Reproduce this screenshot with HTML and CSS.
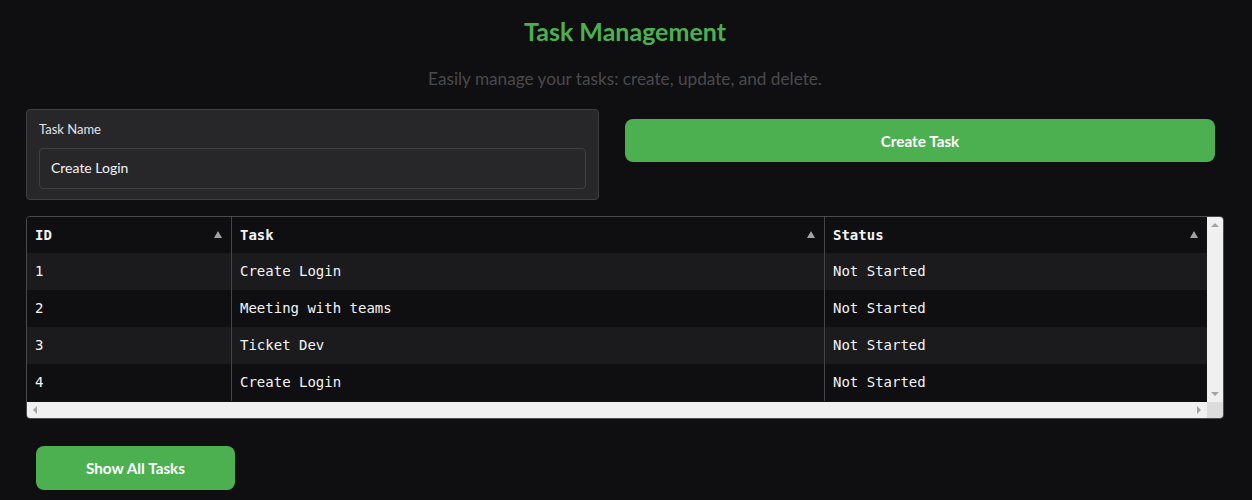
FILE: index.html
```html
<!DOCTYPE html>
<html lang="en">
<head>
<meta charset="utf-8">
<title>Task Management</title>
<link rel="stylesheet" href="styles.css">
</head>
<body>
<div class="app">
  <h1 class="title">Task Management</h1>
  <p class="subtitle">Easily manage your tasks: create, update, and delete.</p>

  <div class="form-row">
    <div class="panel">
      <label class="label" for="task">Task Name</label>
      <div class="input">Create Login</div>
    </div>
    <div class="btn-col">
      <button class="btn btn-wide">Create Task</button>
    </div>
  </div>

  <div class="grid">
    <div class="table">
      <div class="row head">
        <div class="cell c-id">ID<span class="sort"></span></div>
        <div class="cell c-task">Task<span class="sort"></span></div>
        <div class="cell c-status">Status<span class="sort"></span></div>
      </div>
      <div class="row odd">
        <div class="cell c-id">1</div>
        <div class="cell c-task">Create Login</div>
        <div class="cell c-status">Not Started</div>
      </div>
      <div class="row">
        <div class="cell c-id">2</div>
        <div class="cell c-task">Meeting with teams</div>
        <div class="cell c-status">Not Started</div>
      </div>
      <div class="row odd">
        <div class="cell c-id">3</div>
        <div class="cell c-task">Ticket Dev</div>
        <div class="cell c-status">Not Started</div>
      </div>
      <div class="row">
        <div class="cell c-id">4</div>
        <div class="cell c-task">Create Login</div>
        <div class="cell c-status">Not Started</div>
      </div>
    </div>
    <div class="vscroll">
      <span class="arr arr-up"></span>
      <span class="arr arr-down"></span>
    </div>
    <div class="hscroll">
      <span class="arr arr-left"></span>
      <span class="arr arr-right"></span>
    </div>
    <div class="corner"></div>
  </div>

  <div class="bottom">
    <button class="btn btn-show">Show All Tasks</button>
  </div>
</div>
</body>
</html>
```

FILE: styles.css
```css
* { box-sizing: border-box; }
html, body {
  margin: 0;
  background: #0f0f11;
  color: #fafafa;
  font-family: "Lato", "Noto Sans", sans-serif;
}
.app {
  padding: 0 28px 0 26px;
  width: 1252px;
  height: 500px;
  overflow: hidden;
}
.title {
  margin: 0;
  padding-top: 16px;
  height: 58px;
  text-align: center;
  color: #4caf50;
  font-size: 25px;
  font-weight: 700;
  line-height: 30px;
}
.subtitle {
  margin: 0;
  text-align: center;
  color: #4a4a4d;
  font-size: 17.2px;
  line-height: 20px;
  height: 51px;
  padding-top: 11px;
}
.form-row {
  display: flex;
  gap: 26px;
  align-items: flex-start;
}
.panel {
  width: 573px;
  height: 91px;
  background: #27272a;
  border: 1px solid #3f3f46;
  border-radius: 4px;
  padding: 11px 12px 0 12px;
}
.label {
  display: block;
  font-size: 13px;
  color: #e4e4e7;
  line-height: 17px;
  margin-bottom: 10px;
}
.input {
  height: 41px;
  border: 1px solid #3f3f46;
  border-radius: 4px;
  padding: 0 11px;
  font-size: 14px;
  line-height: 38px;
  color: #f4f4f5;
}
.btn-col {
  flex: 1;
  padding-top: 10px;
  padding-right: 9px;
}
.btn {
  display: block;
  border: 0;
  background: #4caf50;
  color: #ffffff;
  font-family: "Lato", "Noto Sans", sans-serif;
  font-weight: 700;
  font-size: 15.3px;
  border-radius: 8px;
  cursor: pointer;
}
.btn-wide {
  width: 100%;
  height: 43px;
}
.grid {
  margin-top: 16px;
  width: 1198px;
  border: 1px solid #4a4a4f;
  border-radius: 4px;
  display: grid;
  grid-template-columns: 1fr 16px;
  grid-template-rows: 185px 16px;
  overflow: hidden;
}
.table {
  font-family: "DejaVu Sans Mono", "Liberation Mono", monospace;
  font-size: 14px;
}
.row {
  display: flex;
  height: 37px;
  background: #0f0f11;
}
.row.head {
  height: 36px;
  font-weight: 700;
}
.row.odd { background: #1b1b1e; }
.cell {
  display: flex;
  align-items: center;
  padding: 0 8px;
  padding-bottom: 1px;
  color: #f4f4f5;
}
.c-id { width: 205px; border-right: 1px solid #444449; }
.c-task { width: 593px; border-right: 1px solid #444449; }
.c-status { flex: 1; }
.sort {
  margin-left: auto;
  width: 0;
  height: 0;
  border-left: 4px solid transparent;
  border-right: 4px solid transparent;
  border-bottom: 7px solid #a1a1aa;
  margin-right: 1px;
}
.vscroll {
  background: #f0f0f0;
  display: flex;
  flex-direction: column;
  justify-content: space-between;
  align-items: center;
  padding: 6px 0 6px;
}
.hscroll {
  background: #f0f0f0;
  display: flex;
  justify-content: space-between;
  align-items: center;
  padding: 0 6px;
}
.corner { background: #dcdcdc; }
.arr { width: 0; height: 0; }
.arr-up {
  border-left: 4px solid transparent;
  border-right: 4px solid transparent;
  border-bottom: 4px solid #a3a3a3;
}
.arr-down {
  border-left: 4px solid transparent;
  border-right: 4px solid transparent;
  border-top: 4px solid #a3a3a3;
}
.arr-left {
  border-top: 4px solid transparent;
  border-bottom: 4px solid transparent;
  border-right: 4px solid #a3a3a3;
}
.arr-right {
  border-top: 4px solid transparent;
  border-bottom: 4px solid transparent;
  border-left: 4px solid #a3a3a3;
}
.bottom {
  padding: 27px 0 0 10px;
}
.btn-show {
  width: 199px;
  height: 44px;
}
```
